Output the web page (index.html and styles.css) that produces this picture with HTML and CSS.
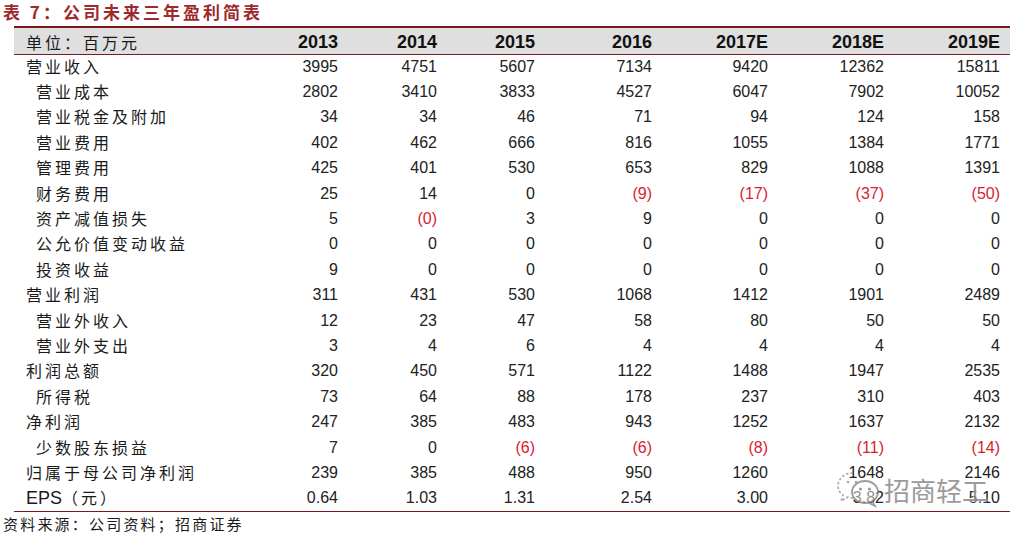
FILE: index.html
```html
<!DOCTYPE html>
<html lang="zh-CN">
<head>
<meta charset="utf-8">
<link rel="stylesheet" href="styles.css">
</head>
<body>
<div class="page">
  <div class="title">表 7：公司未来三年盈利简表</div>
  <div class="table-wrap">
    <table class="fin">
      <colgroup>
        <col class="c-label"><col class="c-a"><col class="c-b"><col class="c-a"><col class="c-w"><col class="c-w"><col class="c-w"><col class="c-w">
      </colgroup>
      <thead>
        <tr><th class="lbl">单位：百万元</th><th>2013</th><th>2014</th><th>2015</th><th>2016</th><th>2017E</th><th>2018E</th><th>2019E</th></tr>
      </thead>
      <tbody>
        <tr><td class="lbl">营业收入</td><td>3995</td><td>4751</td><td>5607</td><td>7134</td><td>9420</td><td>12362</td><td>15811</td></tr>
        <tr><td class="lbl sub">营业成本</td><td>2802</td><td>3410</td><td>3833</td><td>4527</td><td>6047</td><td>7902</td><td>10052</td></tr>
        <tr><td class="lbl sub">营业税金及附加</td><td>34</td><td>34</td><td>46</td><td>71</td><td>94</td><td>124</td><td>158</td></tr>
        <tr><td class="lbl sub">营业费用</td><td>402</td><td>462</td><td>666</td><td>816</td><td>1055</td><td>1384</td><td>1771</td></tr>
        <tr><td class="lbl sub">管理费用</td><td>425</td><td>401</td><td>530</td><td>653</td><td>829</td><td>1088</td><td>1391</td></tr>
        <tr><td class="lbl sub">财务费用</td><td>25</td><td>14</td><td>0</td><td class="neg">(9)</td><td class="neg">(17)</td><td class="neg">(37)</td><td class="neg">(50)</td></tr>
        <tr><td class="lbl sub">资产减值损失</td><td>5</td><td class="neg">(0)</td><td>3</td><td>9</td><td>0</td><td>0</td><td>0</td></tr>
        <tr><td class="lbl sub">公允价值变动收益</td><td>0</td><td>0</td><td>0</td><td>0</td><td>0</td><td>0</td><td>0</td></tr>
        <tr><td class="lbl sub">投资收益</td><td>9</td><td>0</td><td>0</td><td>0</td><td>0</td><td>0</td><td>0</td></tr>
        <tr><td class="lbl">营业利润</td><td>311</td><td>431</td><td>530</td><td>1068</td><td>1412</td><td>1901</td><td>2489</td></tr>
        <tr><td class="lbl sub">营业外收入</td><td>12</td><td>23</td><td>47</td><td>58</td><td>80</td><td>50</td><td>50</td></tr>
        <tr><td class="lbl sub">营业外支出</td><td>3</td><td>4</td><td>6</td><td>4</td><td>4</td><td>4</td><td>4</td></tr>
        <tr><td class="lbl">利润总额</td><td>320</td><td>450</td><td>571</td><td>1122</td><td>1488</td><td>1947</td><td>2535</td></tr>
        <tr><td class="lbl sub">所得税</td><td>73</td><td>64</td><td>88</td><td>178</td><td>237</td><td>310</td><td>403</td></tr>
        <tr><td class="lbl">净利润</td><td>247</td><td>385</td><td>483</td><td>943</td><td>1252</td><td>1637</td><td>2132</td></tr>
        <tr><td class="lbl sub">少数股东损益</td><td>7</td><td>0</td><td class="neg">(6)</td><td class="neg">(6)</td><td class="neg">(8)</td><td class="neg">(11)</td><td class="neg">(14)</td></tr>
        <tr><td class="lbl">归属于母公司净利润</td><td>239</td><td>385</td><td>488</td><td>950</td><td>1260</td><td>1648</td><td>2146</td></tr>
        <tr class="last"><td class="lbl"><span class="latin">EPS</span>（元）</td><td>0.64</td><td>1.03</td><td>1.31</td><td>2.54</td><td>3.00</td><td>3.82</td><td>5.10</td></tr>
      </tbody>
    </table>
    <div class="watermark">
      <svg class="wm-icon" width="46" height="38" viewBox="0 0 46 38">
        <path d="M17 3 C8 3 2 9 2 16 C2 20 4 23 7 25 L5 31 L12 27 C14 28 16 28 18 28" fill="none" stroke="#9a9a9a" stroke-width="1.6" stroke-dasharray="2.5 2"/>
        <ellipse cx="29" cy="22" rx="13" ry="11" fill="rgba(255,255,255,0.6)" stroke="#8a8a8a" stroke-width="1.8"/>
        <path d="M36 31 L39 36 L32 32.5" fill="none" stroke="#8a8a8a" stroke-width="1.6"/>
        <circle cx="24.5" cy="19" r="1.6" fill="#8a8a8a"/>
        <circle cx="33.5" cy="19" r="1.6" fill="#8a8a8a"/>
        <circle cx="12" cy="12" r="1.3" fill="#9a9a9a"/>
        <circle cx="20" cy="12" r="1.3" fill="#9a9a9a"/>
      </svg>
      <span class="wm-text">招商轻工</span>
    </div>
  </div>
  <div class="source">资料来源：公司资料；招商证券</div>
</div>
</body>
</html>
```

FILE: styles.css
```css
html, body {
  margin: 0;
  padding: 0;
  background: #ffffff;
}

.page {
  width: 1016px;
  height: 534px;
  overflow: hidden;
}

.title {
  height: 26px;
  line-height: 24px;
  padding-left: 3px;
  font-family: "Noto Sans CJK SC", "Liberation Sans", sans-serif;
  font-weight: 700;
  font-size: 17px;
  letter-spacing: 3px;
  color: #9e2a2b;
}

.table-wrap {
  position: relative;
  margin-left: 14px;
  width: 996px;
}

.fin {
  border-collapse: collapse;
  table-layout: fixed;
  width: 996px;
}

.c-label { width: 236px; }
.c-a { width: 98px; }
.c-b { width: 99px; }
.c-w { width: 116px; }
.fin col:nth-child(5) { width: 117px; }

.fin thead tr {
  background: #dfdfdf;
  height: 27px;
  border-top: 2px solid #7a1a1e;
  border-bottom: 1.5px solid #7a1a1e;
}

.fin th {
  padding: 2px 10px 0 0;
  text-align: right;
  font-family: "Liberation Sans", Arial, sans-serif;
  font-weight: 700;
  font-size: 18px;
  color: #111;
  line-height: 24px;
}

.fin tbody tr {
  height: 25.4px;
}

.fin tbody tr.last {
  border-bottom: 1.5px solid #7a1a1e;
}

.fin td {
  padding: 0 10px 1px 0;
  height: 25.4px;
  box-sizing: border-box;
  text-align: right;
  font-family: "Liberation Sans", Arial, sans-serif;
  font-size: 16px;
  color: #222;
  line-height: 20px;
  white-space: nowrap;
}

.fin .lbl {
  text-align: left;
  padding-left: 12px;
  padding-bottom: 3px;
  font-family: "Noto Sans CJK SC", sans-serif;
  font-weight: 400;
  font-size: 16px;
  letter-spacing: 3px;
  color: #1a1a1a;
}

.fin th.lbl {
  font-size: 16px;
  font-weight: 400;
  padding-bottom: 0;
}

.fin .lbl.sub {
  padding-left: 22px;
}

.latin {
  font-family: "Liberation Sans", Arial, sans-serif;
  font-size: 18px;
  letter-spacing: 0;
}

.fin td.neg {
  color: #d8222e;
}

.watermark {
  position: absolute;
  left: 822px;
  top: 444px;
  display: flex;
  align-items: center;
  gap: 2px;
  opacity: 0.85;
}

.wm-text {
  font-family: "Noto Sans CJK SC", sans-serif;
  font-size: 26px;
  color: #8a8a8a;
  letter-spacing: 0px;
  text-shadow: 0 0 2px #ffffff, 0 0 2px #ffffff;
}

.source {
  padding-left: 3px;
  margin-top: 2px;
  font-family: "Noto Sans CJK SC", sans-serif;
  font-size: 15px;
  letter-spacing: 2.2px;
  line-height: 20px;
  color: #1a1a1a;
}
```
